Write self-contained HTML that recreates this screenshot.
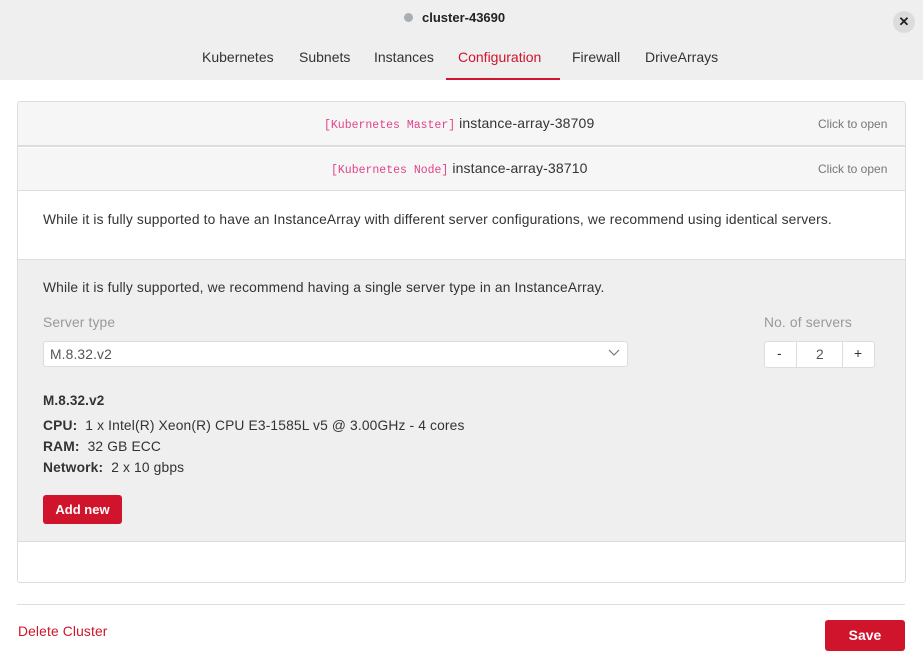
<!DOCTYPE html>
<html><head><style>
*{box-sizing:border-box;margin:0;padding:0}
body{width:923px;height:672px;background:#fff;font-family:"Liberation Sans",sans-serif;font-size:13.8px;letter-spacing:0.15px;color:#333;position:relative;overflow:hidden}
.a{position:absolute}
.hdr{left:0;top:0;width:923px;height:80px;background:#efefef}
.mono{font-family:"Liberation Mono",monospace;font-size:11.5px;color:#e0448a;letter-spacing:0}
.tab{position:absolute;top:49px;font-size:14px;color:#333;letter-spacing:0}
.btn{background:#d0142b;color:#fff;font-weight:bold;border-radius:3px;text-align:center;letter-spacing:0}
</style></head><body>
<div class="a hdr"></div>
<div class="a" style="left:404px;top:13px;width:9px;height:9px;border-radius:50%;background:#a8aeb2"></div>
<div class="a" style="left:422px;top:10px;font-weight:bold;font-size:13px;color:#222;letter-spacing:0">cluster-43690</div>
<div class="a" style="left:893px;top:11px;width:22px;height:22px;border-radius:50%;background:#dcdcdc;text-align:center;line-height:22px;font-weight:bold;font-size:13px;color:#222">✕</div>
<div class="tab" style="left:202px">Kubernetes</div>
<div class="tab" style="left:299px">Subnets</div>
<div class="tab" style="left:374px">Instances</div>
<div class="tab" style="left:458px;color:#d0142b">Configuration</div>
<div class="tab" style="left:572px">Firewall</div>
<div class="tab" style="left:645px">DriveArrays</div>
<div class="a" style="left:446px;top:78px;width:114px;height:2px;background:#d0142b"></div>

<div class="a" style="left:17px;top:101px;width:889px;height:482px;border:1px solid #ddd;border-radius:3px;overflow:hidden">
 <div class="a" style="left:0;top:0;width:887px;height:45px;background:#f6f6f6;border-bottom:2px solid #ddd"></div>
 <div class="a" style="left:0;top:46px;width:887px;height:43px;background:#f6f6f6;border-bottom:1px solid #ddd"></div>
 <div class="a" style="left:0;top:157px;width:887px;height:283px;background:#efefef;border-top:1px solid #ddd;border-bottom:1px solid #ddd"></div>
</div>
<div class="a" style="left:324px;top:115px;white-space:nowrap"><span class="mono">[Kubernetes Master]</span> <span style="font-size:14px">instance-array-38709</span></div>
<div class="a" style="left:818px;top:117px;font-size:12px;color:#777;letter-spacing:0">Click to open</div>
<div class="a" style="left:331px;top:160px;white-space:nowrap"><span class="mono">[Kubernetes Node]</span> <span style="font-size:14px">instance-array-38710</span></div>
<div class="a" style="left:818px;top:162px;font-size:12px;color:#777;letter-spacing:0">Click to open</div>
<div class="a" style="left:43px;top:212px;white-space:nowrap">While it is fully supported to have an InstanceArray with different server configurations, we recommend using identical servers.</div>
<div class="a" style="left:43px;top:280px;white-space:nowrap">While it is fully supported, we recommend having a single server type in an InstanceArray.</div>
<div class="a" style="left:43px;top:315px;color:#999">Server type</div>
<div class="a" style="left:764px;top:315px;color:#999">No. of servers</div>
<div class="a" style="left:43px;top:341px;width:585px;height:26px;background:#fff;border:1px solid #ddd;border-radius:3px;padding:5px 0 0 6px;color:#555">M.8.32.v2</div>
<svg class="a" style="left:608px;top:349px" width="12" height="8"><path d="M1 1l5 5 5-5" fill="none" stroke="#777" stroke-width="1.2"/></svg>
<div class="a" style="left:764px;top:341px;width:111px;height:27px;background:#fff;border:1px solid #ddd;border-radius:3px"></div>
<div class="a" style="left:796px;top:341px;width:1px;height:27px;background:#ddd"></div>
<div class="a" style="left:842px;top:341px;width:1px;height:27px;background:#ddd"></div>
<div class="a" style="left:777px;top:346px">-</div>
<div class="a" style="left:816px;top:347px;color:#555">2</div>
<div class="a" style="left:854px;top:346px">+</div>
<div class="a" style="left:43px;top:393px;font-weight:bold;font-size:13.5px;color:#333">M.8.32.v2</div>
<div class="a" style="left:43px;top:418px;white-space:nowrap"><b>CPU:</b>&nbsp; 1 x Intel(R) Xeon(R) CPU E3-1585L v5 @ 3.00GHz - 4 cores</div>
<div class="a" style="left:43px;top:439px"><b>RAM:</b>&nbsp; 32 GB ECC</div>
<div class="a" style="left:43px;top:460px"><b>Network:</b>&nbsp; 2 x 10 gbps</div>
<div class="a btn" style="left:43px;top:495px;width:79px;height:29px;line-height:29px;font-size:13px">Add new</div>
<div class="a" style="left:17px;top:604px;width:888px;height:1px;background:#ddd"></div>
<div class="a" style="left:18px;top:624px;color:#d0142b">Delete Cluster</div>
<div class="a btn" style="left:825px;top:620px;width:80px;height:31px;line-height:31px;font-size:14px">Save</div>
</body></html>
